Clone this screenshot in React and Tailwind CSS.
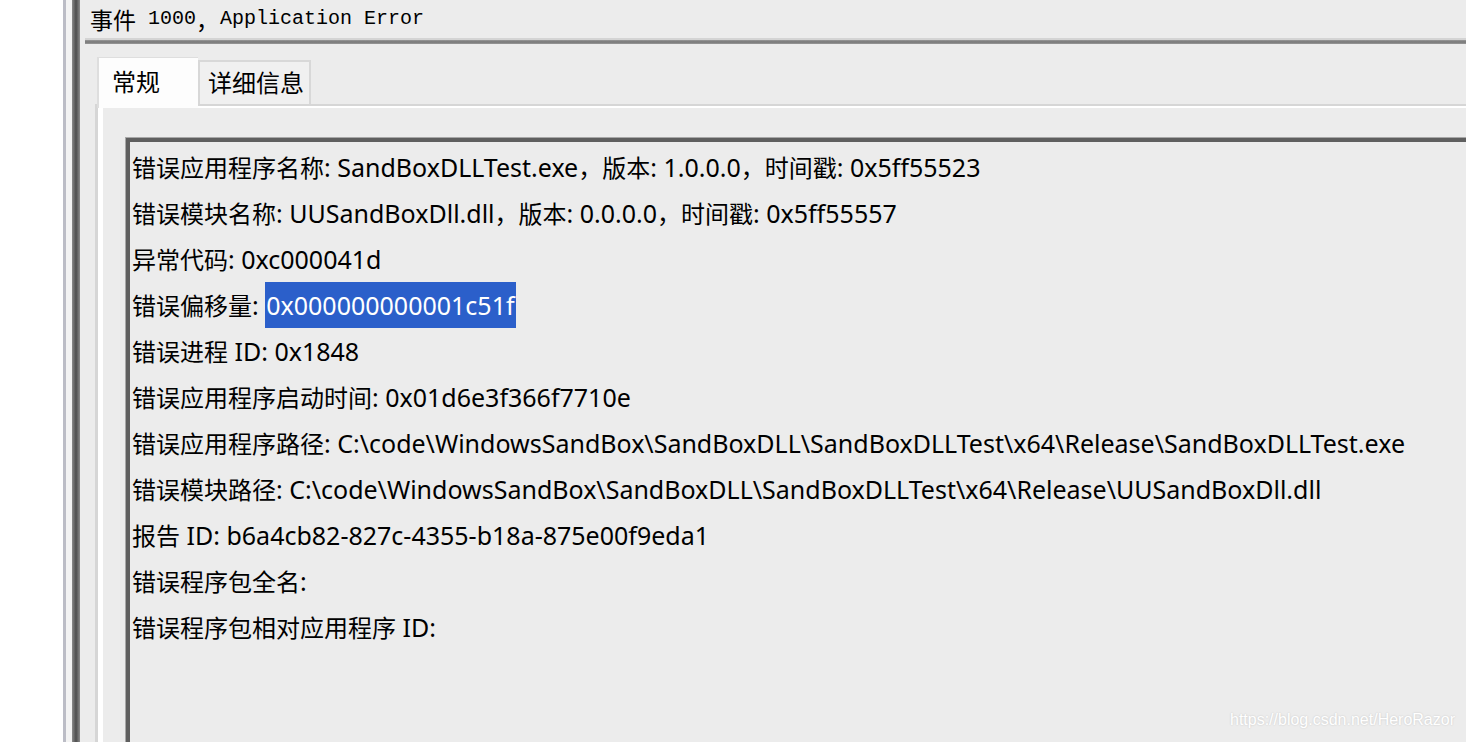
import React from 'react';

const lines = [
  { label: '错误应用程序名称: ', value: 'SandBoxDLLTest.exe，版本: 1.0.0.0，时间戳: 0x5ff55523' },
  { label: '错误模块名称: ', value: 'UUSandBoxDll.dll，版本: 0.0.0.0，时间戳: 0x5ff55557' },
  { label: '异常代码: ', value: '0xc000041d' },
  { label: '错误偏移量: ', value: '0x000000000001c51f', selected: true },
  { label: '错误进程 ID: ', value: '0x1848' },
  { label: '错误应用程序启动时间: ', value: '0x01d6e3f366f7710e' },
  { label: '错误应用程序路径: ', value: 'C:\\code\\WindowsSandBox\\SandBoxDLL\\SandBoxDLLTest\\x64\\Release\\SandBoxDLLTest.exe' },
  { label: '错误模块路径: ', value: 'C:\\code\\WindowsSandBox\\SandBoxDLL\\SandBoxDLLTest\\x64\\Release\\UUSandBoxDll.dll' },
  { label: '报告 ID: ', value: 'b6a4cb82-827c-4355-b18a-875e00f9eda1' },
  { label: '错误程序包全名: ', value: '' },
  { label: '错误程序包相对应用程序 ID: ', value: '' },
];

// CJK runs are set a touch smaller than the latin text
const Mixed = ({ text }) =>
  text.split(/([\u3000-\u9fff\uff00-\uffef]+)/).map((part, i) =>
    /[\u3000-\u9fff\uff00-\uffef]/.test(part) ? (
      <span key={i} className="font-['Noto_Sans_CJK_SC',sans-serif] text-[24px]">{part}</span>
    ) : (
      <span key={i}>{part}</span>
    )
  );

const App = () => {
  return (
    <div className="relative flex h-[742px] w-[1466px] overflow-hidden bg-white">
      {/* left splitter */}
      <div className="w-[63px] shrink-0 bg-white" />
      <div className="w-[3px] shrink-0 bg-[#bcbdc6]" />
      <div className="w-[6px] shrink-0 bg-[#f3f3f3]" />
      <div className="w-[8px] shrink-0 bg-gradient-to-r from-[#8c8c8c] via-[#4e4e4e] to-[#8c8c8c]" />

      <div className="flex min-w-0 flex-1 flex-col bg-[#ececec]">
        {/* title */}
        <div className="flex h-[38px] items-center pl-[10px] font-['Liberation_Mono','Noto_Sans_CJK_SC',monospace] text-[20px] text-black whitespace-nowrap">
          <span className="font-['Noto_Sans_CJK_SC',sans-serif] text-[23px] leading-none">事件</span>
          <span>&nbsp;1000</span>
          <span className="w-[24px] font-['Noto_Sans_CJK_SC',sans-serif] text-[23px] leading-none">，</span>
          <span>Application Error</span>
        </div>
        <div className="ml-[5px] h-[6px] border-t-2 border-[#d4d4d4] bg-gradient-to-b from-[#9a9a9a] via-[#777777] to-[#9a9a9a]" />

        {/* tabs */}
        <div className="mt-[13px] flex items-end pl-[17px] font-['Noto_Sans_CJK_SC',sans-serif] text-[24px] text-black">
          <div className="relative z-10 -mb-[4px] h-[51px] w-[101px] border-l-2 border-t border-[#dedede] bg-[#fdfdfd] pl-[13px] pt-[7px] leading-[32px]">
            常规
          </div>
          <div className="h-[44px] w-[113px] border-2 border-b-0 border-[#d8d8d8] bg-[#f0f0f0] pl-[8px] pt-[4px] leading-[32px]">
            详细信息
          </div>
        </div>

        {/* tab panel */}
        <div className="ml-[15px] flex flex-1 flex-col border-l-[3px] border-t-2 border-[#d6d6d6]">
          <div className="flex flex-1 flex-col border-l-[5px] border-t-2 border-white pl-[22px] pt-[29px]">
            <div className="flex-1 border-l border-t border-[#a8a8a8]">
              <div className="h-full border-l-4 border-t-4 border-[#5f5f5f] pl-[2px] pt-[2px] font-['Noto_Sans','Noto_Sans_CJK_SC',sans-serif] text-[25px] leading-[46px] text-black">
                {lines.map((line, i) => (
                  <div key={i} className="h-[46px] whitespace-nowrap">
                    <Mixed text={line.label} />
                    {line.selected ? (
                      <span className="inline-block h-[46px] bg-[#2b5fca] px-[1px] text-white">{line.value}</span>
                    ) : (
                      <Mixed text={line.value} />
                    )}
                  </div>
                ))}
              </div>
            </div>
          </div>
        </div>
      </div>

      {/* watermark */}
      <div className="absolute bottom-[10px] right-[11px] font-['Liberation_Sans',Arial,sans-serif] text-[16px] text-white [text-shadow:0_0_2px_rgba(0,0,0,0.18)]">
        https://blog.csdn.net/HeroRazor
      </div>
    </div>
  );
};

export default App;
